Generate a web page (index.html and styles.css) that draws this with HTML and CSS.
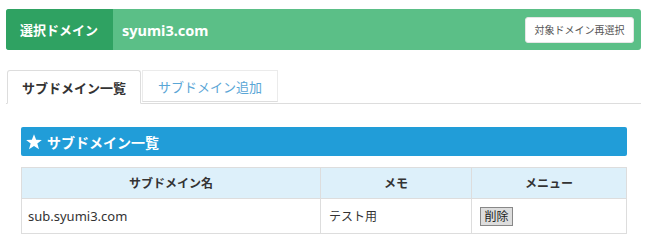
FILE: index.html
```html
<!DOCTYPE html>
<html lang="ja">
<head>
    <meta charset="UTF-8">
    <title>サブドメイン一覧</title>
    <link rel="stylesheet" href="styles.css">
</head>
<body>
    <div class="wrap">
        <!-- 選択中のドメイン -->
        <div class="domain-bar">
            <div class="domain-label">選択ドメイン</div>
            <div class="domain-name">syumi3.com</div>
            <button class="reselect">対象ドメイン再選択</button>
        </div>

        <ul class="tabs">
            <li class="tab active">サブドメイン一覧</li>
            <li class="tab">サブドメイン追加</li>
        </ul>

        <div class="tab-content">
            <h2 class="panel-title">
                <svg class="star" width="16" height="16" viewBox="0 0 24 24"><polygon points="12,0.5 15.2,8.6 23.8,8.9 17,14.3 19.5,23 12,17.9 4.5,23 7,14.3 0.2,8.9 8.8,8.6" fill="#fff"/></svg>
                サブドメイン一覧
            </h2>
            <table class="list">
                <thead>
                    <tr>
                        <th class="col-name">サブドメイン名</th>
                        <th class="col-memo">メモ</th>
                        <th>メニュー</th>
                    </tr>
                </thead>
                <tbody>
                    <tr>
                        <td>sub.syumi3.com</td>
                        <td class="memo">テスト用</td>
                        <td><button class="del">削除</button></td>
                    </tr>
                </tbody>
            </table>
        </div>
    </div>
</body>
</html>
```

FILE: styles.css
```css
body {
    margin: 0;
    padding: 0;
    font-family: "Noto Sans", "Noto Sans CJK JP", sans-serif;
    color: #333;
    background: #fff;
}

.wrap {
    padding: 9px 9px 0 6px;
}

.domain-bar {
    display: flex;
    align-items: center;
    height: 41px;
    background: #5bbf87;
    border-radius: 3px;
    overflow: hidden;
}

.domain-label {
    display: flex;
    align-items: center;
    height: 100%;
    width: 107px;
    padding-left: 14px;
    box-sizing: border-box;
    background: #2fa262;
    color: #fff;
    font-weight: bold;
    font-size: 13px;
}

.domain-name {
    flex: 1;
    padding-left: 9px;
    color: #fff;
    font-weight: bold;
    font-size: 14.5px;
}

.reselect {
    margin-right: 7px;
    width: 109px;
    height: 26px;
    padding: 0;
    border: 1px solid #e6e6e6;
    border-radius: 3px;
    background: #fff;
    color: #555;
    font-family: "Noto Sans CJK JP", sans-serif;
    font-size: 10px;
}

.tabs {
    display: flex;
    list-style: none;
    margin: 20px 0 0 0;
    padding: 0 0 0 1px;
    border-bottom: 1px solid #ddd;
}

.tab {
    width: 136px;
    height: 32px;
    margin-bottom: -1px;
    margin-right: 1px;
    box-sizing: border-box;
    display: flex;
    align-items: center;
    justify-content: center;
    border: 1px solid #ebebeb;
    border-bottom-color: #ddd;
    font-size: 13px;
    color: #5aa6d6;
}

.tab.active {
    width: 134px;
    height: 34px;
    border-color: #ddd;
    border-bottom-color: #fff;
    border-radius: 3px 3px 0 0;
    background: #fff;
    color: #333;
    font-weight: bold;
}

.tab-content {
    padding: 23px 14px 0 15px;
}

.panel-title {
    margin: 0;
    height: 29px;
    display: flex;
    align-items: center;
    padding-left: 5px;
    background: #219dd8;
    border-radius: 2px;
    color: #fff;
    font-size: 14px;
    font-weight: bold;
}

.star {
    margin-right: 5px;
}

.list {
    width: 100%;
    margin-top: 11px;
    border-collapse: collapse;
    font-size: 12px;
}

.list th,
.list td {
    border: 1px solid #ddd;
    padding: 0 8px;
}

.list th {
    height: 30px;
    background: #ddf0fa;
    font-weight: bold;
    color: #333;
}

.list td {
    height: 34px;
    text-align: left;
}

.col-name {
    width: 282px;
}

.col-memo {
    width: 134px;
}

.list td:first-child {
    padding-left: 6px;
    font-size: 13px;
}

.del {
    width: 33px;
    height: 19px;
    padding: 0;
    border: 1px solid #888;
    border-radius: 0;
    background: #ddd;
    color: #222;
    font-family: "Noto Sans CJK JP", sans-serif;
    font-size: 12px;
    line-height: 1;
}
```
